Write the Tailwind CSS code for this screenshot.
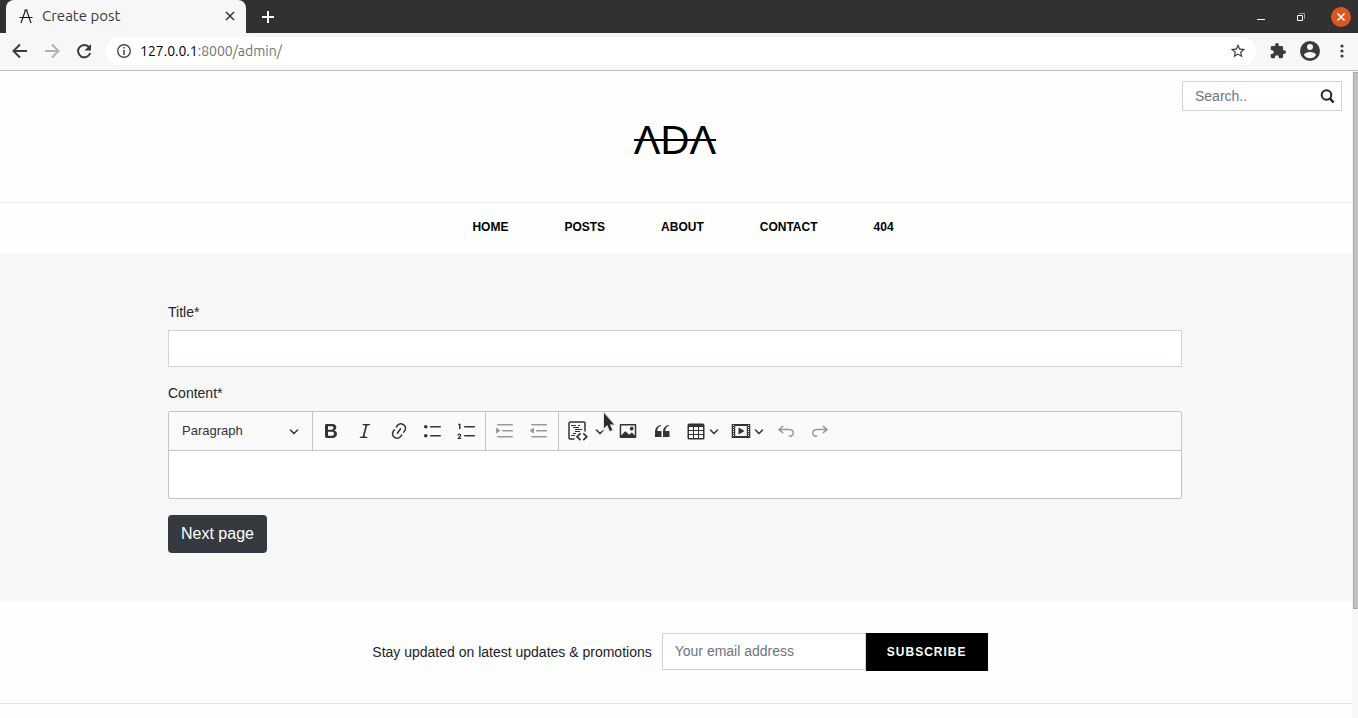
<!DOCTYPE html>
<html lang="en">
<head>
<meta charset="utf-8">
<title>Create post</title>
<script src="https://cdn.jsdelivr.net/npm/@tailwindcss/browser@4"></script>
</head>
<body class="flex min-h-screen flex-col bg-[#fefefe] font-['Liberation_Sans',sans-serif] text-sm text-[#212529]">

<!-- Browser tab strip -->
<div class="flex h-[33px] items-end bg-[#333031] pl-1.5 font-['Ubuntu','Noto_Sans',sans-serif]">
  <div class="flex h-[33px] w-60 items-center rounded-t-lg bg-[#f7f7f7] pr-2 pb-0.5 pl-3">
    <svg class="h-4 w-4" viewBox="0 0 16 16" fill="none" stroke="#111" stroke-width="1.1"><path d="M3 15 7.500 2h1L13 15M1.500 9.500h13M6.500 2h3"/></svg>
    <span class="ml-2 flex-1 text-[15px] text-[#3c3a3b]">Create post</span>
    <button aria-label="Close tab" class="p-0.5"><svg class="h-3 w-3" viewBox="0 0 12 12" stroke="#3c3a3b" stroke-width="1.6"><path d="m2 2 8 8M10 2l-8 8"/></svg></button>
  </div>
  <button aria-label="New tab" class="ml-3.5 self-center"><svg class="h-4 w-4" viewBox="0 0 16 16" stroke="#fff" stroke-width="2"><path d="M8 2v12M2 8h12"/></svg></button>
  <div class="ml-auto flex items-center gap-7 self-center pr-[7px]">
    <button aria-label="Minimize"><svg class="h-3 w-3" viewBox="0 0 12 12"><path d="M2 8h8v1H2z" fill="#fff"/></svg></button>
    <button aria-label="Restore"><svg class="h-3 w-3" viewBox="0 0 12 12" fill="none"><path d="M4 2.500h5.500V8" stroke="#999"/><path d="M2.500 4.500h5v5h-5z" stroke="#fff"/></svg></button>
    <button aria-label="Close window" class="-ml-1"><svg class="h-5 w-5" viewBox="0 0 20 20"><circle cx="10" cy="10" r="10" fill="#dd5620"/><path d="m6.500 6.500 7 7M13.500 6.500l-7 7" stroke="#fff" stroke-width="1.600"/></svg></button>
  </div>
</div>

<!-- Address bar -->
<div class="flex h-[38px] items-center border-b border-[#bebebe] bg-[#f7f7f7] pr-2 pb-0.5 pl-3 font-['Ubuntu','Noto_Sans',sans-serif]">
  <button aria-label="Back"><svg class="h-4 w-4" viewBox="0 0 16 16" fill="none" stroke="#3c3a3b" stroke-width="2"><path d="M15 8H2M8 1.500 1.500 8 8 14.500"/></svg></button>
  <button aria-label="Forward" class="ml-4"><svg class="h-4 w-4" viewBox="0 0 16 16" fill="none" stroke="#b3b1b2" stroke-width="2"><path d="M1 8h13M8 1.500 14.500 8 8 14.500"/></svg></button>
  <button aria-label="Reload" class="ml-4"><svg class="h-4 w-4" viewBox="0 0 16 16"><path d="M13.200 4.300A6.200 6.200 0 1 0 14.200 10" fill="none" stroke="#3c3a3b" stroke-width="2"/><path d="M15 1v6.500H8.500z" fill="#3c3a3b"/></svg></button>
  <div class="ml-3.5 flex h-7 flex-1 items-center rounded-full bg-white pr-2.5 pl-2.5">
    <svg class="h-4 w-4" viewBox="0 0 16 16"><circle cx="8" cy="8" r="6.300" fill="none" stroke="#4a4647" stroke-width="1.400"/><path d="M7.200 4h1.600v1.600H7.200zM7.200 7h1.600v5H7.200z" fill="#4a4647"/></svg>
    <span class="ml-2 flex-1 text-[#6b7673]"><span class="text-black">127.0.0.1</span>:8000/admin/</span>
    <button aria-label="Bookmark"><svg class="h-4 w-4" viewBox="1 1 22 22" fill="#3c3a3b"><path d="M22 9.240l-7.190-.620L12 2 9.190 8.630 2 9.240l5.460 4.730L5.820 21 12 17.270 18.180 21l-1.630-7.030L22 9.240zM12 15.400l-3.760 2.270 1-4.280-3.320-2.880 4.380-.380L12 6.100l1.710 4.040 4.380.380-3.320 2.880 1 4.280L12 15.400z"/></svg></button>
  </div>
  <button aria-label="Extensions" class="ml-3.5"><svg class="h-4 w-4" viewBox="1 1 22 22" fill="#3c3a3b"><path d="M20.500 11H19V7c0-1.100-.9-2-2-2h-4V3.500a2.500 2.500 0 0 0-5 0V5H4c-1.100 0-1.990.9-1.990 2v3.800H3.500c1.490 0 2.700 1.210 2.700 2.700s-1.210 2.700-2.700 2.700H2V20c0 1.100.9 2 2 2h3.800v-1.500c0-1.490 1.210-2.700 2.700-2.700s2.700 1.210 2.700 2.700V22H17c1.100 0 2-.9 2-2v-4h1.500a2.500 2.500 0 0 0 0-5z"/></svg></button>
  <button aria-label="Profile" class="ml-3.5"><svg class="h-5 w-5" viewBox="2 2 20 20" fill="#3c3a3b"><path d="M12 2a10 10 0 1 0 0 20 10 10 0 0 0 0-20zm0 3a3 3 0 1 1 0 6 3 3 0 0 1 0-6zm0 14.200a7.200 7.200 0 0 1-6-3.220c.03-1.990 4-3.080 6-3.080s5.970 1.090 6 3.080a7.200 7.200 0 0 1-6 3.220z"/></svg></button>
  <button aria-label="Menu" class="ml-3.5"><svg class="h-4 w-4" viewBox="0 0 16 16" fill="#3c3a3b"><circle cx="8" cy="3" r="1.600"/><circle cx="8" cy="8" r="1.600"/><circle cx="8" cy="13" r="1.600"/></svg></button>
</div>

<div class="flex flex-1">
  <div class="min-w-0 flex-1">
    <header class="relative flex h-[131px] flex-col items-center">
      <form class="absolute top-2.5 right-2.5 flex h-[30px] w-40 items-center border border-[#ced4da] bg-white pr-1.5 pl-3">
        <input type="search" aria-label="Search" placeholder="Search.." class="min-w-0 flex-1 outline-none placeholder:text-[#6c757d]">
        <button aria-label="Submit search"><svg class="h-4 w-4" viewBox="0 0 16 16" fill="none" stroke="#212529"><circle cx="7.500" cy="7" r="4.800" stroke-width="2"/><path d="m11 10.500 3.500 4" stroke-width="2.500"/></svg></button>
      </form>
      <a href="#" aria-label="ADA" class="relative mt-[49px] mr-0.5 text-[40px] leading-10 text-black">ΛDΛ<span class="absolute inset-x-0 top-[19px] h-0.5 bg-black"></span></a>
    </header>
    <nav class="flex h-[52px] items-center justify-center gap-14 border-t border-[#e9e9e9] pb-1 pl-3.5 text-xs font-bold text-black">
      <a href="#">HOME</a><a href="#">POSTS</a><a href="#">ABOUT</a><a href="#">CONTACT</a><a href="#">404</a>
    </nav>

    <main class="bg-[#f7f7f7] pt-12 pr-[170px] pb-12 pl-[168px]">
      <form>
        <label for="title" class="block leading-5">Title*</label>
        <input id="title" type="text" class="mt-2 block h-[37px] w-full border border-[#ced4da] bg-white px-3">
        <label for="content" class="mt-4 block leading-5">Content*</label>

        <div class="relative mt-2 rounded-[2px] border border-[#c4c4c4] bg-white text-[#333]">
          <div class="flex h-[39px] items-stretch rounded-t-[2px] border-b border-[#c4c4c4] bg-[#fafafa]">
            <button type="button" class="flex w-36 items-center justify-between border-r border-[#c4c4c4] pr-[13px] pl-[13px] text-[13px]">Paragraph
              <svg class="h-2.5 w-2.5" viewBox="0 0 10 10" fill="#333"><path d="M.941 4.523a.75.75 0 1 1 1.060-1.060l3.006 3.005 3.005-3.005a.75.75 0 1 1 1.060 1.060l-3.549 3.550a.75.75 0 0 1-1.168-.136L.941 4.523z"/></svg></button>
            <div class="flex border-r border-[#c4c4c4] px-px">
              <button type="button" aria-label="Bold" class="flex w-[34px] items-center justify-center"><svg class="h-5 w-5" viewBox="0 0 20 20" fill="#333"><path d="M10.187 17H5.773c-.637 0-1.092-.138-1.364-.415-.273-.277-.409-.718-.409-1.323V4.738c0-.617.14-1.062.419-1.332.279-.27.73-.406 1.354-.406h4.680c.69 0 1.288.041 1.793.124.506.083.96.242 1.360.478.341.197.644.447.906.75a3.262 3.262 0 0 1 .808 2.162c0 1.401-.722 2.426-2.167 3.075C15.050 10.175 16 11.315 16 13.010a3.756 3.756 0 0 1-2.296 3.504 6.100 6.100 0 0 1-1.517.377c-.571.073-1.238.11-2 .11zm-.217-6.217H7v4.087h3.069c1.977 0 2.965-.69 2.965-2.072 0-.707-.256-1.220-.768-1.537-.512-.319-1.277-.478-2.296-.478zM7 5.130v3.619h2.606c.729 0 1.292-.067 1.690-.2a1.600 1.600 0 0 0 .91-.765c.165-.267.247-.566.247-.897 0-.707-.26-1.176-.778-1.409-.519-.232-1.310-.348-2.375-.348H7z"/></svg></button>
              <button type="button" aria-label="Italic" class="flex w-[34px] items-center justify-center"><svg class="h-5 w-5" viewBox="0 0 20 20" fill="#333"><path d="M9.586 14.633l.021.004c-.036.335.095.655.393.962.082.083.173.15.274.201h1.474a.6.6 0 1 1 0 1.200H5.304a.6.6 0 0 1 0-1.200h1.150c.474-.07.809-.182 1.005-.334.157-.122.291-.32.404-.597l2.416-9.550a1.053 1.053 0 0 0-.281-.823 1.120 1.120 0 0 0-.442-.296H8.150a.6.6 0 0 1 0-1.200h6.443a.6.6 0 1 1 0 1.200h-1.195c-.376.056-.65.155-.823.296-.215.175-.423.439-.623.79l-2.366 9.347z"/></svg></button>
              <button type="button" aria-label="Link" class="flex w-[34px] items-center justify-center"><svg class="h-5 w-5" viewBox="0 0 20 20" fill="#333"><path d="M11.077 15l.991-1.416a.75.75 0 1 1 1.229.86l-1.148 1.640a.748.748 0 0 1-.217.206 5.251 5.251 0 0 1-8.503-5.955.741.741 0 0 1 .12-.274l1.147-1.639a.75.75 0 1 1 1.228.86L4.933 10.700l.006.003a3.750 3.750 0 0 0 6.132 4.294l.006.004zm5.494-5.335a.748.748 0 0 1-.12.274l-1.147 1.639a.75.75 0 1 1-1.228-.86l.86-1.230a3.750 3.750 0 0 0-6.144-4.301l-.86 1.229a.75.75 0 0 1-1.229-.86l1.148-1.640a.748.748 0 0 1 .217-.206 5.251 5.251 0 0 1 8.503 5.955zm-4.563-2.532a.75.75 0 0 1 .184 1.045l-3.155 4.505a.75.75 0 1 1-1.229-.86l3.155-4.506a.75.75 0 0 1 1.045-.184z"/></svg></button>
              <button type="button" aria-label="Bulleted list" class="flex w-[34px] items-center justify-center"><svg class="h-5 w-5" viewBox="0 0 20 20" fill="#333"><path d="M7 5.750c0 .414.336.75.75.75h9.500a.75.75 0 1 0 0-1.500h-9.500a.75.75 0 0 0-.75.75zm-6 0C1 4.784 1.777 4 2.750 4c.966 0 1.750.777 1.750 1.750 0 .966-.777 1.750-1.750 1.750C1.784 7.500 1 6.723 1 5.750zm6 9c0 .414.336.75.75.75h9.500a.75.75 0 1 0 0-1.500h-9.500a.75.75 0 0 0-.75.75zm-6 0c0-.966.777-1.750 1.750-1.750.966 0 1.750.777 1.750 1.750 0 .966-.777 1.750-1.750 1.750-.966 0-1.750-.777-1.750-1.750z"/></svg></button>
              <button type="button" aria-label="Numbered list" class="flex w-[34px] items-center justify-center"><svg class="h-5 w-5" viewBox="0 0 20 20" fill="#333"><path d="M7 5.750c0 .414.336.75.75.75h9.500a.75.75 0 1 0 0-1.500h-9.500a.75.75 0 0 0-.75.75zM3.500 3v5H2V3.700H1v-1h2.500V3zM.343 17.857l2.590-3.257H2.920a.6.6 0 1 0-1.040 0H.302a2 2 0 1 1 3.995 0h-.001c-.048.405-.16.734-.333.988-.175.254-.59.692-1.244 1.312H4.300v1h-4l.043-.043zM7 14.750a.75.75 0 0 1 .75-.75h9.500a.75.75 0 1 1 0 1.500h-9.500a.75.75 0 0 1-.75-.75z"/></svg></button>
            </div>
            <div class="flex border-r border-[#c4c4c4] px-0.5">
              <button type="button" disabled aria-label="Increase indent" class="flex w-[34px] items-center justify-center"><svg class="h-5 w-5" viewBox="0 0 20 20" fill="#999"><path d="M2 3.750c0 .414.336.75.75.75h14.500a.75.75 0 1 0 0-1.500H2.750a.75.75 0 0 0-.75.75zm5 6c0 .414.336.75.75.75h9.500a.75.75 0 1 0 0-1.500h-9.500a.75.75 0 0 0-.75.75zM2.750 16.500h14.500a.75.75 0 1 0 0-1.500H2.750a.75.75 0 1 0 0 1.500zM1.632 6.950L5.020 9.358a.4.4 0 0 1-.013.661l-3.390 2.207A.4.4 0 0 1 1 11.892V7.275a.4.4 0 0 1 .632-.326z"/></svg></button>
              <button type="button" disabled aria-label="Decrease indent" class="flex w-[34px] items-center justify-center"><svg class="h-5 w-5" viewBox="0 0 20 20" fill="#999"><path d="M2 3.750c0 .414.336.75.75.75h14.500a.75.75 0 1 0 0-1.500H2.750a.75.75 0 0 0-.75.75zm5 6c0 .414.336.75.75.75h9.500a.75.75 0 1 0 0-1.500h-9.500a.75.75 0 0 0-.75.75zM2.750 16.500h14.500a.75.75 0 1 0 0-1.500H2.750a.75.75 0 1 0 0 1.500zM4.368 6.950L.98 9.358a.4.4 0 0 0 .013.661l3.390 2.207A.4.4 0 0 0 5 11.892V7.275a.4.4 0 0 0-.632-.326z"/></svg></button>
            </div>
            <div class="flex">
              <button type="button" aria-label="Insert code block" class="flex w-[52px] items-center gap-[7px] pl-[9px]"><svg class="h-5 w-5" viewBox="0 0 20 20" fill="none" stroke="#333"><path d="M6.500 18H2.200A1.200 1.200 0 0 1 1 16.800V2.200A1.200 1.200 0 0 1 2.200 1h13.600A1.200 1.200 0 0 1 17 2.200V10.500" stroke-width="1.500"/><path d="M3 4.500h5M5 6.500h6M7 8.500h7M7 10.500h5M5 12.500h3M3 14.500h4M10 4.500h2"/><path d="m12.500 12.300-3.500 3.400 3.500 3.400M15.300 12.300l3.500 3.400-3.500 3.400" stroke-width="1.700"/></svg><svg class="h-2.5 w-2.5" viewBox="0 0 10 10" fill="#333"><path d="M.941 4.523a.75.75 0 1 1 1.060-1.060l3.006 3.005 3.005-3.005a.75.75 0 1 1 1.060 1.060l-3.549 3.550a.75.75 0 0 1-1.168-.136L.941 4.523z"/></svg></button>
              <button type="button" aria-label="Insert image" class="flex w-[34px] items-center justify-center"><svg class="h-5 w-5" viewBox="0 0 20 20" fill="#333"><path d="M6.910 10.540c.26-.23.64-.21.88.03l3.360 3.140 2.230-2.060a.64.64 0 0 1 .87 0l2.520 2.970V4.500H3.200v10.120l3.710-4.080zm10.270-7.510c.6 0 1.090.47 1.090 1.050v11.840c0 .59-.49 1.060-1.090 1.060H2.790c-.6 0-1.090-.47-1.090-1.060V4.080c0-.58.49-1.050 1.100-1.050h14.380zm-5.220 5.560a1.960 1.960 0 1 1 3.400-1.960 1.960 1.960 0 0 1-3.400 1.960z"/></svg></button>
              <button type="button" aria-label="Block quote" class="flex w-[34px] items-center justify-center"><svg class="h-5 w-5" viewBox="0 0 20 20" fill="#333"><path d="M3 10.423a6.500 6.500 0 0 1 6.056-6.408l.038.67C6.448 5.423 5.354 7.663 5.220 10H9c.552 0 .5.432.5.986v4.511c0 .554-.448.503-1 .503h-5c-.552 0-.5-.449-.5-1.003v-4.574zm8 0a6.500 6.500 0 0 1 6.056-6.408l.038.67c-2.646.739-3.740 2.979-3.873 5.315H17c.552 0 .5.432.5.986v4.511c0 .554-.448.503-1 .503h-5c-.552 0-.5-.449-.5-1.003v-4.574z"/></svg></button>
              <button type="button" aria-label="Insert table" class="flex w-[45px] items-center gap-[3px] pl-[7px]"><svg class="h-5 w-5" viewBox="0 0 20 20" fill="#333"><path d="M3 6v3h4V6H3zm0 4v3h4v-3H3zm0 4v3h4v-3H3zm5 3h4v-3H8v3zm5 0h4v-3h-4v3zm4-4v-3h-4v3h4zm0-4V6h-4v3h4zm1.500 8a1.500 1.500 0 0 1-1.500 1.500H3A1.500 1.500 0 0 1 1.500 17V4c.222-.863 1.068-1.500 2-1.500h13c.932 0 1.778.637 2 1.500v13zM12 13v-3H8v3h4zm0-4V6H8v3h4z"/></svg><svg class="h-2.5 w-2.5" viewBox="0 0 10 10" fill="#333"><path d="M.941 4.523a.75.75 0 1 1 1.060-1.060l3.006 3.005 3.005-3.005a.75.75 0 1 1 1.060 1.060l-3.549 3.550a.75.75 0 0 1-1.168-.136L.941 4.523z"/></svg></button>
              <button type="button" aria-label="Insert media" class="flex w-[45px] items-center gap-[3px] pl-[7px]"><svg class="h-5 w-5" viewBox="0 0 20 20" fill="#333"><path d="M18.680 3.030c.6 0 .59-.03.59.55v12.840c0 .59.010.56-.59.56H1.290c-.6 0-.59.03-.59-.56V3.580c0-.58-.010-.55.6-.55h17.380zM15.770 15V5H4.200v10h11.570zM2 4v1h1V4H2zm0 2v1h1V6H2zm0 2v1h1V8H2zm0 2v1h1v-1H2zm0 2v1h1v-1H2zm0 2v1h1v-1H2zM17 4v1h1V4h-1zm0 2v1h1V6h-1zm0 2v1h1V8h-1zm0 2v1h1v-1h-1zm0 2v1h1v-1h-1zm0 2v1h1v-1h-1zM7.500 7.177a.4.4 0 0 1 .593-.351l5.133 2.824a.4.4 0 0 1 0 .7l-5.133 2.824a.4.4 0 0 1-.593-.35V7.177z"/></svg><svg class="h-2.5 w-2.5" viewBox="0 0 10 10" fill="#333"><path d="M.941 4.523a.75.75 0 1 1 1.060-1.060l3.006 3.005 3.005-3.005a.75.75 0 1 1 1.060 1.060l-3.549 3.550a.75.75 0 0 1-1.168-.136L.941 4.523z"/></svg></button>
              <button type="button" disabled aria-label="Undo" class="flex w-[34px] items-center justify-center"><svg class="h-5 w-5" viewBox="0 0 20 20" fill="#999"><path d="M5.042 9.367l2.189 1.837a.75.75 0 0 1-.965 1.149l-3.788-3.180a.747.747 0 0 1-.21-.284.75.75 0 0 1 .17-.945L6.230 4.762a.75.75 0 1 1 .964 1.150L4.863 7.866h8.917A.75.75 0 0 1 14 7.900a4 4 0 1 1-1.477 7.718l.344-1.489a2.500 2.500 0 1 0 1.094-4.730l.008-.032H5.042z"/></svg></button>
              <button type="button" disabled aria-label="Redo" class="flex w-[34px] items-center justify-center"><svg class="h-5 w-5" viewBox="0 0 20 20" fill="#999"><path d="M14.958 9.367l-2.189 1.837a.75.75 0 0 0 .965 1.149l3.788-3.180a.747.747 0 0 0 .21-.284.75.75 0 0 0-.17-.945L13.770 4.762a.75.75 0 1 0-.964 1.150l2.331 1.955H6.220A.75.75 0 0 0 6 7.900a4 4 0 1 0 1.477 7.718l-.344-1.489A2.500 2.500 0 1 1 6.039 9.400l-.008-.032h8.927z"/></svg></button>
            </div>
          </div>
          <textarea id="content" class="block h-[47px] w-full resize-none rounded-b-[2px] bg-white p-3 outline-none"></textarea>
          <!-- Mouse pointer -->
          <svg class="pointer-events-none absolute top-0 left-[433px] h-6 w-4" viewBox="0 0 16 24"><path d="M2 1v15l3.300-3 2.600 6 2.400-1.100-2.500-5.400H12z" fill="#2b2929" stroke="#e8e8e8" stroke-width="3" paint-order="stroke"/></svg>
        </div>
        <button type="button" class="mt-4 block h-[38px] rounded bg-[#343a40] px-[13px] text-base text-white">Next page</button>
      </form>
    </main>

    <footer>
      <form class="flex items-start justify-center border-b border-[#e3e3e3] pt-8 pb-8 pl-2">
        <label for="email" class="mr-2.5 leading-[38px]">Stay updated on latest updates &amp; promotions</label>
        <input id="email" type="email" placeholder="Your email address" class="h-[37px] w-51 border border-[#ced4da] bg-white px-3 pb-0.5 placeholder:text-[#6c757d]">
        <button type="button" class="h-[38px] w-[122px] bg-black text-xs font-bold tracking-[1px] text-white">SUBSCRIBE</button>
      </form>
    </footer>
  </div>

  <!-- Scrollbar -->
  <div class="w-1.5 bg-[#f7f7f7] pt-px pl-px">
    <div class="h-[537px] border border-r-0 border-[#a8a8a8] bg-[#c1c1c1]"></div>
  </div>
</div>
</body>
</html>
